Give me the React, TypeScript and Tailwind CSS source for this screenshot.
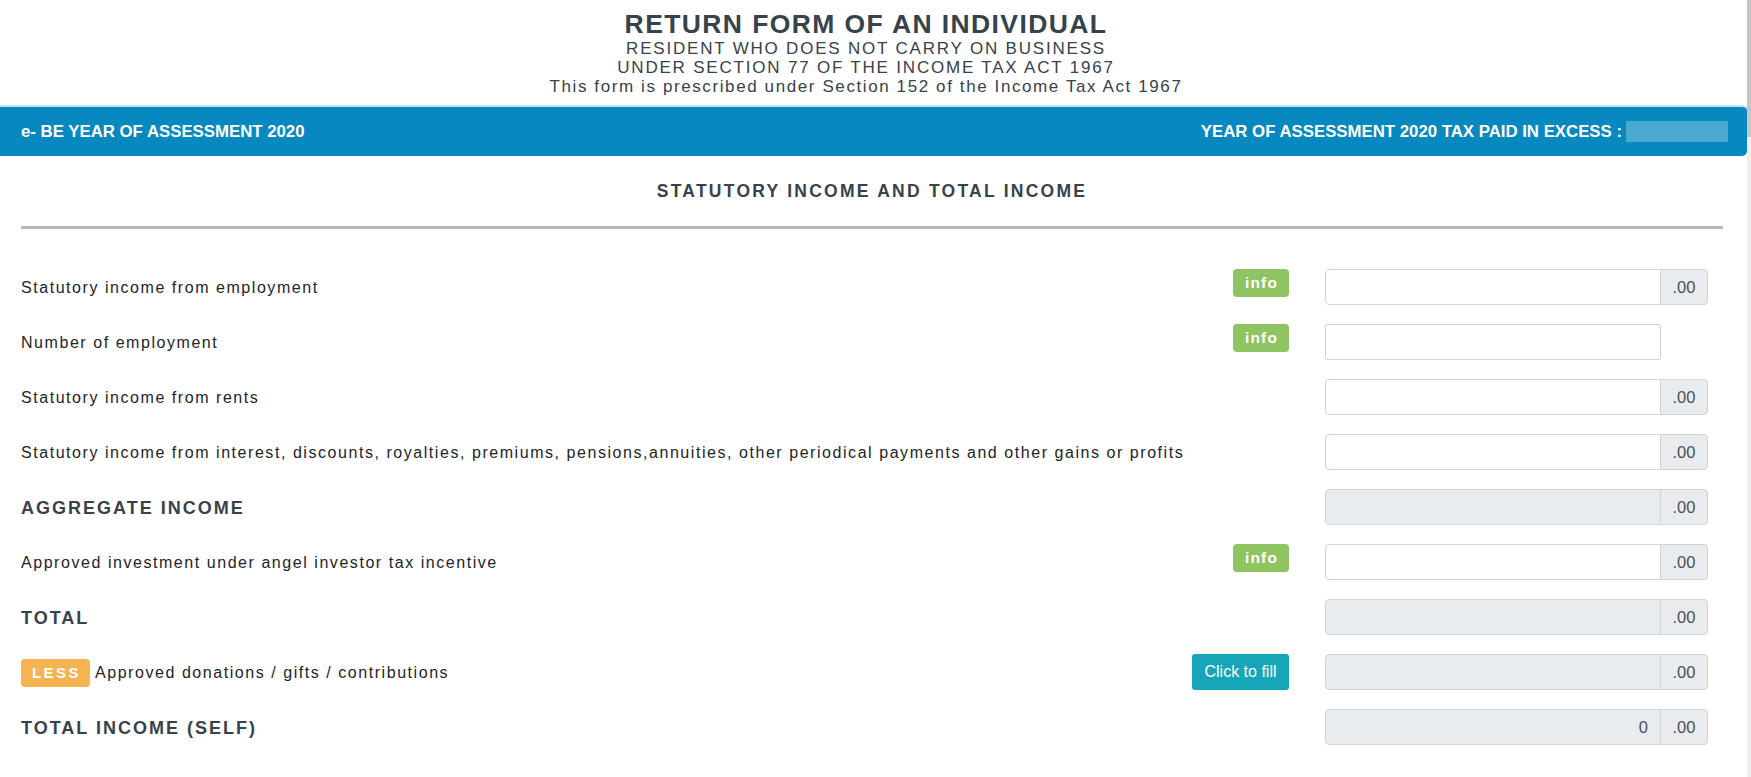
import React from "react";

type Row = {
  label: React.ReactNode;
  heading?: boolean;
  action?: "info" | "fill";
  disabled?: boolean;
  addon?: boolean;
  value?: string;
};

const font = { fontFamily: '"Liberation Sans", Arial, sans-serif' };

function InfoBadge() {
  return (
    <span className="inline-flex h-[28px] w-[56px] items-center justify-center rounded-[4px] bg-[#8fc462] pl-[1px] text-[15.5px] font-bold tracking-[1.2px] text-white">
      info
    </span>
  );
}

function FillButton() {
  return (
    <button className="h-[36px] w-[97px] rounded-[3px] bg-[#17a6b8] text-[16px] text-white">
      Click to fill
    </button>
  );
}

function InputGroup({ disabled, addon, value }: { disabled?: boolean; addon?: boolean; value?: string }) {
  if (!addon) {
    return (
      <div className="flex w-[383px]">
        <div className="h-[36px] w-[336px] rounded-[2px] border border-[#cfd4d9] bg-white" />
      </div>
    );
  }
  return (
    <div className="flex h-[36px] w-[383px]">
      <div
        className={
          disabled
            ? "flex flex-1 items-center justify-end rounded-l-[4px] border border-[#cfd4d9] bg-[#e9ecef] pr-[12px] text-[16.5px] text-[#495057]"
            : "flex flex-1 items-center justify-end rounded-l-[4px] border border-[#cfd4d9] bg-white pr-[12px] text-[16.5px] text-[#495057]"
        }
      >
        {value}
      </div>
      <div className="-ml-px flex w-[48px] items-center justify-center rounded-r-[4px] border border-[#cfd4d9] bg-[#e9ecef] text-[16.5px] text-[#495057]">
        .00
      </div>
    </div>
  );
}

const rows: Row[] = [
  { label: "Statutory income from employment", action: "info", addon: true },
  { label: "Number of employment", action: "info", addon: false },
  { label: "Statutory income from rents", addon: true },
  {
    label:
      "Statutory income from interest, discounts, royalties, premiums, pensions,annuities, other periodical payments and other gains or profits",
    addon: true,
  },
  { label: "AGGREGATE INCOME", heading: true, disabled: true, addon: true },
  { label: "Approved investment under angel investor tax incentive", action: "info", addon: true },
  { label: "TOTAL", heading: true, disabled: true, addon: true },
  {
    label: (
      <span className="flex items-center">
        <span className="mr-[5px] inline-flex h-[28px] w-[69px] items-center justify-center rounded-[4px] bg-[#f6b352] pl-[2px] text-[15px] font-bold tracking-[2.5px] text-white">
          LESS
        </span>
        Approved donations / gifts / contributions
      </span>
    ),
    action: "fill",
    disabled: true,
    addon: true,
  },
  { label: "TOTAL INCOME (SELF)", heading: true, disabled: true, addon: true, value: "0" },
];

export default function App() {
  return (
    <div className="flex min-h-[777px] w-full bg-white" style={font}>
      <div className="flex-1">
        <div className="pb-[9px] pr-[15px] pt-[9px] text-center">
          <div className="text-[26.5px] font-bold leading-[30px] tracking-[1.4px] text-[#37424a]">
            RETURN FORM OF AN INDIVIDUAL
          </div>
          <div className="text-[17px] leading-[19px] tracking-[1.6px] text-[#37424a]">
            <div className="tracking-[1.8px]">RESIDENT WHO DOES NOT CARRY ON BUSINESS</div>
            <div className="tracking-[1.8px]">UNDER SECTION 77 OF THE INCOME TAX ACT 1967</div>
            <div>This form is prescribed under Section 152 of the Income Tax Act 1967</div>
          </div>
        </div>

        <div className="flex h-[51px] items-center justify-between rounded-r-[5px] border-t-2 border-[#bde2f1] bg-[#0789bf] pl-[21px] pr-[19px] text-[16.8px] font-bold text-white">
          <span>e- BE YEAR OF ASSESSMENT 2020</span>
          <span className="flex items-center">
            YEAR OF ASSESSMENT 2020 TAX PAID IN EXCESS :
            <span className="ml-[4px] inline-block h-[21px] w-[102px] bg-[#4ba8d0]" />
          </span>
        </div>

        <div className="pl-[21px] pr-[24px]">
          <div className="flex h-[70px] items-center justify-center text-[17.5px] font-bold tracking-[2.25px] text-[#37424a]">
            STATUTORY INCOME AND TOTAL INCOME
          </div>
          <div className="h-[3px] bg-[#b8b8b8]" />

          <div className="mt-[40px] flex flex-col gap-[19px] pr-[15px]">
            {rows.map((r, i) => (
              <div key={i} className="flex items-start">
                <div
                  className={
                    r.heading
                      ? "flex h-[36px] flex-1 items-center whitespace-nowrap pt-[2px] text-[18px] font-bold tracking-[2px] text-[#37424a]"
                      : "flex h-[36px] flex-1 items-center whitespace-nowrap pt-[2px] text-[16px] tracking-[1.55px] text-[#212529]"
                  }
                >
                  {r.label}
                </div>
                <div className="flex w-[97px] justify-end">
                  {r.action === "info" && <InfoBadge />}
                  {r.action === "fill" && <FillButton />}
                </div>
                <div className="ml-[36px]">
                  <InputGroup disabled={r.disabled} addon={r.addon} value={r.value} />
                </div>
              </div>
            ))}
          </div>
        </div>
      </div>
      <div className="flex w-[4px] flex-col bg-[#efefef]">
        <div className="h-[137px] bg-[#c6c6c6]" />
      </div>
    </div>
  );
}
